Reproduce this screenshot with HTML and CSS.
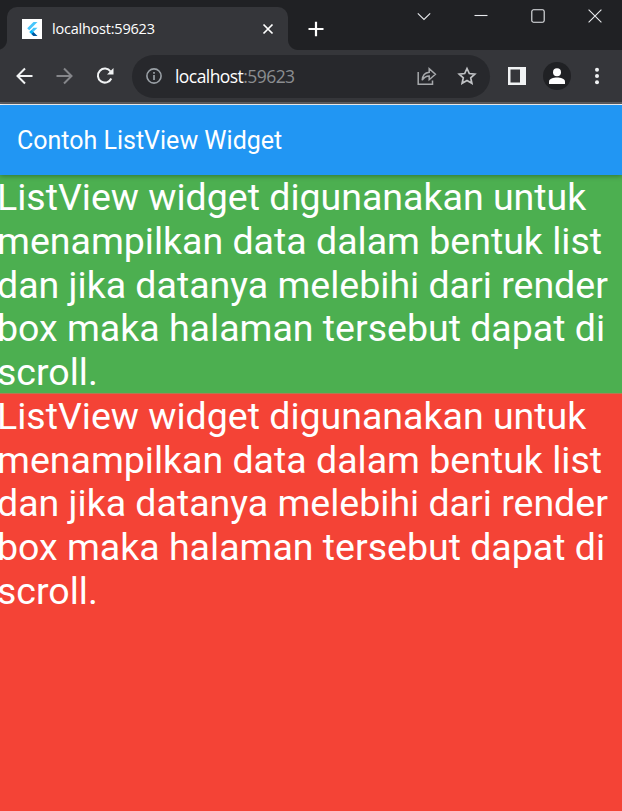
FILE: index.html
```html
<!DOCTYPE html>
<html lang="id">
<head>
<meta charset="utf-8">
<title>localhost:59623</title>
<link rel="stylesheet" href="styles.css">
</head>
<body>
<header class="browser">
  <div class="tabstrip">
    <span class="curve curve-left"></span>
    <div class="tab">
      <svg class="favicon" width="20" height="20" viewBox="0 0 20 20"><path fill="#fff" d="M0 0h20v20H0z"/><path fill="#47c5fb" d="M11.500 3H15.500L7.200 11.300 5.200 9.300zM11.500 8.700h4l-4.300 4.300 4.300 4h-4l-4-4z"/><path fill="#00569e" d="m9.400 15 2-2 4 4h-4z"/><path fill="#00b5f8" d="m7.400 13 2-2 2 2-2 2z"/></svg>
      <span class="tab-title">localhost:59623</span>
      <svg class="tab-close" width="12" height="12" viewBox="0 0 12 12"><path d="m1.500 1.500 9 9m0-9-9 9" stroke="#fff" stroke-width="1.700"/></svg>
    </div>
    <span class="curve curve-right"></span>
    <svg class="new-tab" width="16" height="16" viewBox="0 0 16 16"><path d="M8 .8v14.400M.5 8h15" stroke="#fff" stroke-width="2.200"/></svg>
    <div class="window-controls">
      <svg width="14" height="14" viewBox="0 0 14 14"><path d="m.8 4.300 6.200 6.200 6.200-6.200"/></svg>
      <svg width="14" height="14" viewBox="0 0 14 14"><path d="M.5 6.500h13"/></svg>
      <svg width="14" height="14" viewBox="0 0 14 14"><rect x=".8" y=".8" width="12.400" height="12.400" rx="1.800"/></svg>
      <svg width="14" height="14" viewBox="0 0 14 14"><path d="m.6.6 12.800 12.800m0-12.800L.6 13.400"/></svg>
    </div>
  </div>
  <div class="toolbar">
    <svg class="nav" width="18" height="18" viewBox="0 0 18 18"><path d="M16.500 9H1.500m7.500-7.500L1.500 9l7.500 7.500" stroke="#f1f3f4"/></svg>
    <svg class="nav" width="18" height="18" viewBox="0 0 18 18"><path d="M.5 9h15M8 1.500 15.500 9 8 16.500" stroke="#85868a"/></svg>
    <svg class="nav" width="18" height="18" viewBox="0 0 18 18"><path d="M15.300 11.500A7 7 0 1 1 14.600 4.500" stroke="#f1f3f4"/><path d="M17.500 1v6.500H11z" fill="#f1f3f4"/></svg>
    <div class="address">
      <svg width="16" height="16" viewBox="0 0 16 16" fill="none" stroke="#9aa0a6"><circle cx="8" cy="8" r="7.100" stroke-width="1.600"/><path d="M8 7v5M8 4v1.800" stroke-width="1.700"/></svg>
      <span class="url">localhost<span class="port">:59623</span></span>
      <svg class="share" width="20" height="20" viewBox="0 0 20 20" fill="none" stroke="#a6a8ab" stroke-width="1.500"><path d="M1.200 6v12.200h14.300V14.500M5.200 14.200C5.500 9.500 8 6.600 12.200 6.200V2.600l6.200 5.600-6.200 5.500v-3.600c-3.300.1-5.400 1.500-7 4.100z"/></svg>
      <svg width="20" height="20" viewBox="0 0 20 20" fill="none" stroke="#c0c2c5" stroke-width="1.700"><path d="m10 2.500 2.300 5 5.500.6-4.100 3.700 1.200 5.400-4.900-2.800-4.900 2.800 1.200-5.400-4.100-3.700 5.500-.6z"/></svg>
    </div>
    <svg class="panel" width="18" height="18" viewBox="0 0 18 18"><path fill="#f1f3f4" fill-rule="evenodd" d="M0 0h18v18H0zM2.500 2.500v13H12v-13z"/></svg>
    <svg class="profile" width="28" height="28" viewBox="0 0 28 28"><circle cx="14" cy="14" r="14" fill="#202124"/><circle cx="14" cy="10.200" r="4" fill="#fff"/><path fill="#fff" d="M6 22v-2.500c0-2.700 4.500-4 8-4s8 1.300 8 4V22z"/></svg>
    <svg class="menu" width="4" height="18" viewBox="0 0 4 18" fill="#f1f3f4"><circle cx="2" cy="2.800" r="2"/><circle cx="2" cy="9" r="2"/><circle cx="2" cy="15.200" r="2"/></svg>
  </div>
</header>
<h1 class="appbar">Contoh ListView Widget</h1>
<main class="list">
  <p class="item green">ListView widget digunanakan untuk menampilkan data dalam bentuk list dan jika datanya melebihi dari render box maka halaman tersebut dapat di scroll.</p>
  <p class="item red">ListView widget digunanakan untuk menampilkan data dalam bentuk list dan jika datanya melebihi dari render box maka halaman tersebut dapat di scroll.</p>
</main>
</body>
</html>
```
FILE: styles.css
```css
* { box-sizing: border-box; }
body {
  margin: 0;
  height: 811px;
  overflow: hidden;
  display: flex;
  flex-direction: column;
  font-family: Roboto, sans-serif;
  color: #fff;
}
svg { display: block; flex: none; }
.browser {
  flex: none;
  height: 105px;
  border-bottom: 1px solid #fff;
  background: #35363a;
  font-family: "Open Sans", "Noto Sans", sans-serif;
}
.tabstrip {
  height: 50px;
  display: flex;
  align-items: flex-end;
  background: #202124;
}
.curve { width: 10px; height: 10px; flex: none; }
.curve-left { width: 7px; background: radial-gradient(circle at -3px 0, #202124 9.500px, #35363a 10.500px); }
.curve-right { background: radial-gradient(circle at 10px 0, #202124 9.500px, #35363a 10.500px); }
.tab {
  width: 281px;
  height: 43px;
  padding: 0 14px 0 15px;
  display: flex;
  align-items: center;
  border-radius: 10px 10px 0 0;
  background: #35363a;
}
.tab-title {
  margin-left: 10px;
  flex: 1;
  font-size: 14.500px;
  letter-spacing: -0.220px;
  white-space: nowrap;
}
.new-tab { margin: 0 0 13px 10px; }
.window-controls {
  flex: 1;
  align-self: flex-start;
  display: flex;
  justify-content: flex-end;
  gap: 43px;
  padding: 9px 20px 0 0;
}
.window-controls svg { fill: none; stroke: #e8eaed; stroke-width: 1.100; }
.toolbar {
  height: 54px;
  padding: 0 23px 0 16px;
  display: flex;
  align-items: center;
  border-bottom: 2px solid #5c5d61;
}
.nav { margin-right: 22px; fill: none; stroke-width: 2; }
.address {
  width: 358px;
  height: 43px;
  margin-left: -4px;
  padding: 0 13px 0 14px;
  display: flex;
  align-items: center;
  border-radius: 22px;
  background: #27282c;
}
.url {
  flex: 1;
  margin-left: 13px;
  font-size: 17.500px;
  letter-spacing: -0.560px;
  white-space: nowrap;
}
.port { color: #8b8d90; }
.share { margin-right: 20px; }
.panel { margin-left: 18px; }
.profile { margin-left: 17px; }
.menu { margin-left: 24px; }
.appbar {
  position: relative;
  z-index: 1;
  flex: none;
  height: 70px;
  margin: 0;
  padding: 1px 0 0 17px;
  font-size: 25px;
  font-weight: 400;
  line-height: 70px;
  background: #2196f3;
  box-shadow: 0 1px 5px rgba(0, 0, 0, .35);
}
.list { flex: 1; display: flex; flex-direction: column; }
.item {
  margin: 0 0 0 -3px;
  padding-top: 1px;
  font-size: 37.500px;
  line-height: 43.750px;
}
.green { flex: none; height: 219px; border-bottom: 1px solid #b27a51; background: #4caf50; }
.red { flex: 1; padding-top: 0.800px; background: #f44336; }
```
